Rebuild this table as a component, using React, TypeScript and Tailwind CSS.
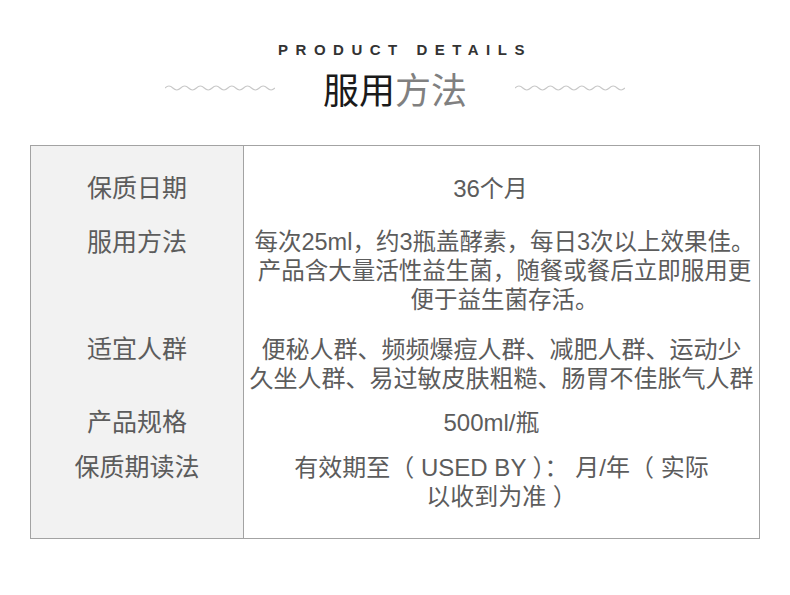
import React from 'react';

const wave = (() => {
  let d = 'M0 4';
  for (let i = 0; i < 7; i++) d += ' q4 -4 8 0 q4 4 8 0';
  return d;
})();

function Wave() {
  return (
    <svg width="110" height="8" viewBox="0 0 112 8" className="shrink-0">
      <path d={wave} fill="none" stroke="#c8c8c8" strokeWidth="1.1" />
    </svg>
  );
}

const rows: { label: string; value: React.ReactNode; pad: string; extra?: string }[] = [
  { label: '保质日期', value: '36个月', pad: 'pt-[28px]', extra: 'pr-[22px] text-[24px]' },
  {
    label: '服用方法',
    value: (
      <>
        每次25ml，约3瓶盖酵素，每日3次以上效果佳。
        <br />
        产品含大量活性益生菌，随餐或餐后立即服用更
        <br />
        便于益生菌存活。
      </>
    ),
    pad: 'pt-[25px]',
    extra: 'text-[23.5px] pl-[6px]',
  },
  {
    label: '适宜人群',
    value: (
      <>
        便秘人群、频频爆痘人群、减肥人群、运动少
        <br />
        久坐人群、易过敏皮肤粗糙、肠胃不佳胀气人群
      </>
    ),
    pad: 'pt-[20px]',
    extra: 'text-[24px]',
  },
  { label: '产品规格', value: '500ml/瓶', pad: 'pt-[15px]', extra: 'pr-[20px] text-[24px]' },
  {
    label: '保质期读法',
    value: (
      <>
        有效期至（ USED BY ）： 月/年（ 实际
        <br />
        以收到为准 ）
      </>
    ),
    pad: 'pt-[16px] pb-[27px]',
    extra: 'text-[24px]',
  },
];

export default function App() {
  return (
    <div
      className="w-[790px] h-[595px] bg-white flex flex-col items-center pt-[40px]"
      style={{ fontFamily: '"Liberation Sans", "Noto Sans CJK SC", sans-serif' }}
    >
      <div className="text-[15px] leading-[20px] font-bold text-[#333] tracking-[7.5px] pl-[20px]">
        PRODUCT DETAILS
      </div>

      <div
        className="mt-[6px] flex items-center gap-[48px]"
        style={{ fontFamily: '"Noto Sans CJK SC", sans-serif' }}
      >
        <Wave />
        <div className="text-[36px] leading-[44px]">
          <span className="text-[#1a1a1a]">服用</span>
          <span className="text-[#808080]">方法</span>
        </div>
        <Wave />
      </div>

      {/* details table */}
      <div className="mt-[35px] w-[730px] border border-[#a3a3a3] grid grid-cols-[213px_1fr] leading-[29px] text-[#5c5c5c]">
        {rows.map((r) => (
          <React.Fragment key={r.label}>
            <div className={`bg-[#f2f2f2] border-r border-[#a3a3a3] text-center text-[25px] ${r.pad}`}>
              {r.label}
            </div>
            <div className={`text-center whitespace-nowrap ${r.pad} ${r.extra ?? ''}`}>{r.value}</div>
          </React.Fragment>
        ))}
      </div>
    </div>
  );
}
